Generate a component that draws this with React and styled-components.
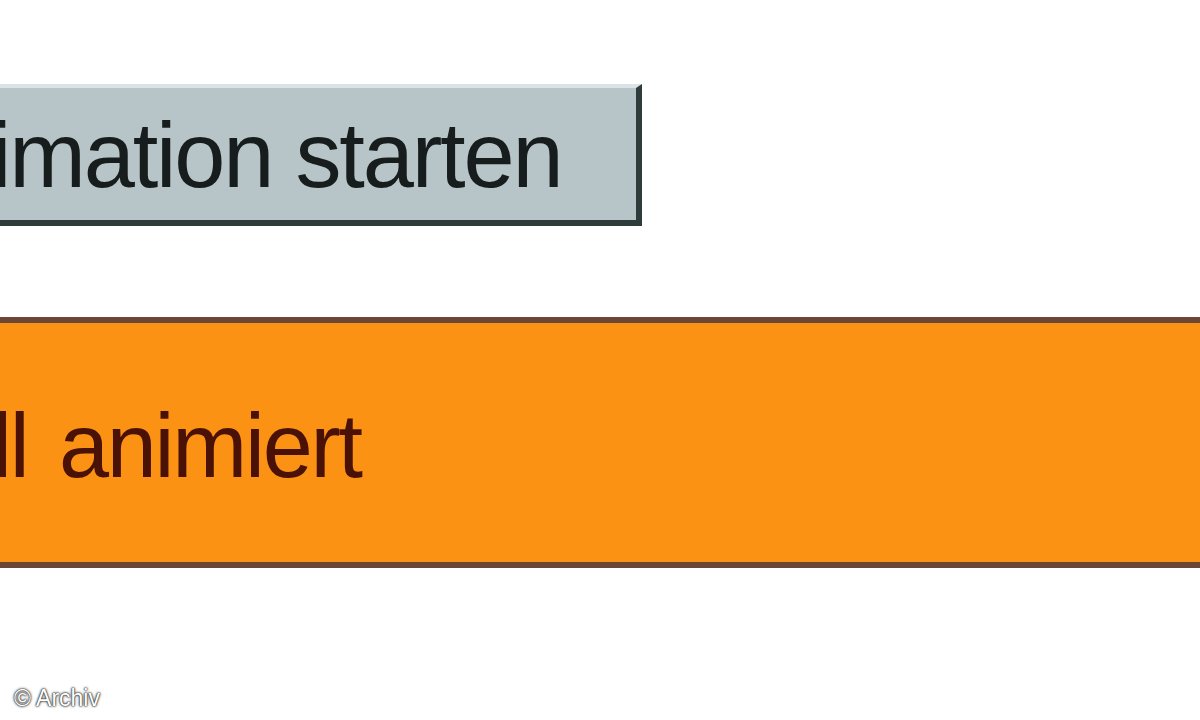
import React from "react";
import styled, { createGlobalStyle } from "styled-components";

const Global = createGlobalStyle`
  html, body { margin: 0; padding: 0; background: #ffffff; }
  body { font-family: "Liberation Sans", Arial, sans-serif; }
`;

const Page = styled.div`
  width: 1200px;
  height: 720px;
  overflow: hidden;
  display: flex;
  flex-direction: column;
  background: #ffffff;
`;

const ButtonRow = styled.div`
  display: flex;
  padding-top: 84px;
`;

const StartButton = styled.button`
  box-sizing: border-box;
  width: 662px;
  height: 142px;
  margin-left: -20px;
  padding: 17px 0 0 7px;
  display: flex;
  align-items: flex-start;
  background: #b8c5c8;
  border-style: solid;
  border-width: 4px 6px 6px 4px;
  border-color: #dde3e4 #2f3c3b #2f3c3b #dde3e4;
  border-radius: 0;
  font-family: "Liberation Sans", Arial, sans-serif;
  font-size: 92px;
  line-height: 100px;
  letter-spacing: -2.2px;
  color: #171c1c;
  white-space: nowrap;
  cursor: pointer;
`;

const Bar = styled.div`
  box-sizing: border-box;
  height: 251px;
  margin-top: 91px;
  margin-right: -40px;
  padding: 73px 0 0 0;
  display: flex;
  align-items: flex-start;
  background: #fc9214;
  border-top: 6px solid #6b4636;
  border-bottom: 6px solid #6b4636;
  overflow: hidden;
`;

const BarLabel = styled.span`
  margin-left: -8px;
  font-size: 90px;
  line-height: 100px;
  letter-spacing: -2.3px;
  word-spacing: 9px;
  color: #4a1206;
  white-space: nowrap;
`;

const Credit = styled.div`
  margin-top: auto;
  padding: 0 0 10px 14px;
  font-size: 23px;
  line-height: 24px;
  color: #ffffff;
  text-shadow: 0 0 3px #333, 0 0 2px #333, 0 0 1px #000;
`;

export default function App() {
  return (
    <>
      <Global />
      <Page>
        <ButtonRow>
          <StartButton>imation starten</StartButton>
        </ButtonRow>
        <Bar>
          <BarLabel>ll animiert</BarLabel>
        </Bar>
        <Credit>© Archiv</Credit>
      </Page>
    </>
  );
}
